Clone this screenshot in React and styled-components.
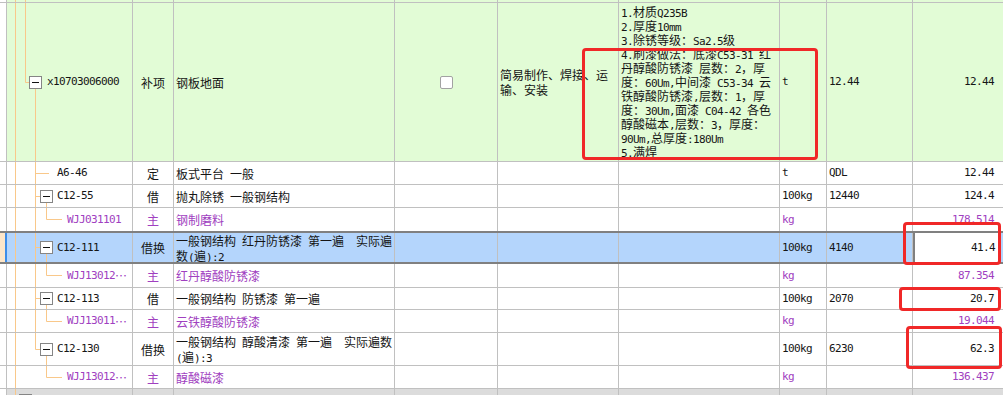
import React from 'react';
import styled, { createGlobalStyle, css } from 'styled-components';

const C = {
  grid: '#c0c0c0',
  green: '#e2fcd6',
  blue: '#b4d5fc',
  purple: '#a040c0',
  tree: '#f9c88a',
  dark: '#808080',
  red: '#f02828',
  text: '#151515',
};

const Global = createGlobalStyle`
  html, body { margin: 0; padding: 0; background: #fff; }
  body {
    width: 1003px; height: 395px; overflow: hidden;
    font-family: "Noto Sans CJK SC", "Noto Sans", sans-serif;
    font-size: 12px; color: ${C.text};
  }
`;

const COLS = '7px 126px 41px 221px 103px 121px 161px 47px 86px 1fr';

const Sheet = styled.div`
  position: relative;
  width: 1003px;
  height: 395px;
  overflow: hidden;
`;

const Row = styled.div`
  display: grid;
  grid-template-columns: ${COLS};
  box-sizing: border-box;
  height: ${(p) => p.$h}px;
  background: ${(p) => p.$bg || '#fff'};
  border-bottom: ${(p) => (p.$noBorder ? 'none' : `1px solid ${C.grid}`)};
  ${(p) => p.$top && css`border-top: 1px solid ${C.grid};`}
  ${(p) =>
    p.$sel &&
    css`
      border-top: 2px solid ${C.dark};
      border-bottom: 2px solid ${C.dark};
    `}
`;

const Cell = styled.div`
  box-sizing: border-box;
  border-right: 1px solid ${C.grid};
  display: flex;
  align-items: center;
  min-width: 0;
  overflow: hidden;
  white-space: pre;
  justify-content: ${(p) =>
    p.$align === 'center' ? 'center' : p.$align === 'right' ? 'flex-end' : 'flex-start'};
  padding: 0 ${(p) => (p.$align === 'right' ? 9 : 0)}px 0 ${(p) => (p.$align === 'left' || !p.$align ? p.$pl ?? 2 : 0)}px;
  color: ${(p) => (p.$purple ? C.purple : 'inherit')};
`;

const Gutter = styled.div`
  box-sizing: border-box;
  background: ${(p) => (p.$sel ? '#fde6c9' : '#fff')};
  border-right: ${(p) => (p.$sel ? '2px solid #3d8de8' : `1px solid ${C.grid}`)};
`;

const CodeCell = styled(Cell)`
  padding: 0;
  align-items: stretch;
`;

const CodeText = styled.span`
  display: flex;
  align-items: center;
`;

const QtyCell = styled(Cell)`
  border-right: none;
  ${(p) =>
    p.$editing &&
    css`
      background: #fff;
      border-left: 2px solid ${C.dark};
      border-right: 2px solid ${C.dark};
      margin-right: 3px;
      padding-right: 3px;
    `}
`;

const Lines = styled.div`
  display: flex;
  flex-direction: column;
`;

const Line = styled.span`
  display: block;
  height: ${(p) => p.$lh}px;
  line-height: ${(p) => p.$lh}px;
  white-space: pre;
`;

const Check = styled.span`
  width: 13px;
  height: 13px;
  box-sizing: border-box;
  border: 1px solid #a2a2a2;
  border-radius: 2px;
  background: #fff;
`;

const Lat = styled.span`
  font-family: "DejaVu Sans Mono", "Liberation Mono", monospace;
  font-size: 11px;
  letter-spacing: -0.62px;
  line-height: 0;
`;

const Mark = styled.div`
  position: absolute;
  box-sizing: border-box;
  left: ${(p) => p.$x}px;
  top: ${(p) => p.$y}px;
  width: ${(p) => p.$w}px;
  height: ${(p) => p.$hh}px;
  border: 3px solid ${C.red};
  border-radius: 4px;
  pointer-events: none;
`;

function T({ s }) {
  const parts = String(s).match(/[\x20-\x7e]+|[^\x20-\x7e]+/g) || [];
  return parts.map((p, i) =>
    /^[\x20-\x7e]/.test(p) ? <Lat key={i}>{p}</Lat> : <React.Fragment key={i}>{p}</React.Fragment>
  );
}

function TextLines({ lines, lh = 15 }) {
  return (
    <Lines>
      {lines.map((l, i) => (
        <Line key={i} $lh={lh}>
          <T s={l} />
        </Line>
      ))}
    </Lines>
  );
}

/* tree connector drawing; local x = absolute x - 7 */
const P15 = 8.5, P25 = 18.5, P35 = 28.5, P46 = 39.5;

function TreeBox({ x, cy }) {
  return (
    <g>
      <rect x={x + 0.5} y={cy - 6} width={12} height={12} fill="#fff" stroke="#858585" strokeWidth={1} />
      <line x1={x + 3} x2={x + 10} y1={cy} y2={cy} stroke="#111" strokeWidth={1} />
    </g>
  );
}

function Tree({ kind, h, last, after }) {
  const cy = Math.floor(h / 2) + 0.5;
  const L = (x1, y1, x2, y2, k) => (
    <line key={k} x1={x1} y1={y1} x2={x2} y2={y2} stroke={C.tree} strokeWidth={1} />
  );
  let w = 50;
  const els = [];
  if (kind === 'sliver') {
    w = 40;
    els.push(L(P15, 0, P15, h, 'a'), L(P25, 0, P25, h, 'b'));
  } else if (kind === 'root') {
    w = 40;
    els.push(L(P15, 0, P15, h, 'a'), L(P25, 0, P25, cy, 'b'), L(P25, cy, 22, cy, 'c'));
    els.push(L(P35, cy + 6, P35, h, 'd'));
    els.push(<TreeBox key="box" x={22} cy={cy} />);
  } else if (kind === 'leaf') {
    w = 50;
    els.push(L(P15, 0, P15, h, 'a'), L(P35, 0, P35, h, 'b'), L(P35, cy, 42, cy, 'c'));
  } else if (kind === 'node') {
    w = 50;
    els.push(L(P15, 0, P15, h, 'a'), L(P35, 0, P35, last ? cy : h, 'b'), L(P35, cy, 33, cy, 'c'));
    els.push(L(P46, cy + 6, P46, h, 'd'));
    els.push(<TreeBox key="box" x={33} cy={cy} />);
  } else if (kind === 'grand') {
    w = 60;
    els.push(L(P15, 0, P15, h, 'a'));
    if (!after) els.push(L(P35, 0, P35, h, 'b'));
    els.push(L(P46, 0, P46, cy, 'c'), L(P46, cy, 55, cy, 'd'));
  } else if (kind === 'group') {
    w = 40;
    els.push(L(P15, 0, P15, cy, 'a'), L(P15, cy, 12, cy, 'b'));
    els.push(<TreeBox key="box" x={12} cy={cy} />);
  }
  return (
    <svg width={w} height={h} style={{ flex: 'none', display: 'block' }}>
      {els}
    </svg>
  );
}

const ROWS = [
  {
    h: 160, ch: 158, top: true, bg: C.green, kind: 'root',
    code: 'x10703006000', type: '补项', name: ['钢板地面'], check: true,
    work: ['简易制作、焊接、运', '输、安装'],
    spec: [
      '1.材质Q235B',
      '2.厚度10mm',
      '3.除锈等级：Sa2.5级',
      '4.刷漆做法：底漆C53-31 红',
      '丹醇酸防锈漆 层数：2，厚',
      '度：60Um,中间漆 C53-34 云',
      '铁醇酸防锈漆,层数：1，厚',
      '度：30Um,面漆 C04-42 各色',
      '醇酸磁本,层数：3，厚度：',
      '90Um,总厚度:180Um',
      '5.满焊',
    ],
    unit: 't', expr: '12.44', qty: '12.44',
  },
  { h: 23, ch: 22, kind: 'leaf', code: 'A6-46', type: '定', name: ['板式平台 一般'], unit: 't', expr: 'QDL', qty: '12.44' },
  { h: 23, ch: 22, kind: 'node', code: 'C12-55', type: '借', name: ['抛丸除锈 一般钢结构'], unit: '100kg', expr: '12440', qty: '124.4' },
  { h: 23, ch: 23, noBorder: true, kind: 'grand', purple: true, code: 'WJJ031101', type: '主', name: ['钢制磨料'], unit: 'kg', qty: '178.514' },
  {
    h: 33, ch: 29, sel: true, bg: C.blue, kind: 'node', code: 'C12-111', type: '借换',
    name: ['一般钢结构 红丹防锈漆 第一遍  实际遍', '数(遍):2'], unit: '100kg', expr: '4140', qty: '41.4', editing: true,
  },
  { h: 24, ch: 23, kind: 'grand', purple: true, code: 'WJJ13012…', type: '主', name: ['红丹醇酸防锈漆'], unit: 'kg', qty: '87.354' },
  { h: 22, ch: 21, kind: 'node', code: 'C12-113', type: '借', name: ['一般钢结构 防锈漆 第一遍'], unit: '100kg', expr: '2070', qty: '20.7' },
  { h: 23, ch: 22, kind: 'grand', purple: true, code: 'WJJ13011…', type: '主', name: ['云铁醇酸防锈漆'], unit: 'kg', qty: '19.044' },
  {
    h: 33, ch: 32, kind: 'node', last: true, code: 'C12-130', type: '借换',
    name: ['一般钢结构 醇酸清漆 第一遍  实际遍数', '(遍):3'], unit: '100kg', expr: '6230', qty: '62.3',
  },
  { h: 23, ch: 22, kind: 'grand', after: true, purple: true, code: 'WJJ13012…', type: '主', name: ['醇酸磁漆'], unit: 'kg', qty: '136.437' },
  { h: 23, ch: 22, bg: '#dcdcdc', kind: 'group', code: '', type: '部', name: ['屋面工程'] },
];

function SheetRow({ r }) {
  return (
    <Row $h={r.h} $bg={r.bg} $top={r.top} $sel={r.sel} $noBorder={r.noBorder}>
      <Gutter $sel={r.sel} />
      <CodeCell $purple={r.purple}>
        <Tree kind={r.kind} h={r.ch} last={r.last} after={r.after} />
        <CodeText>
          <T s={r.code} />
        </CodeText>
      </CodeCell>
      <Cell $align="center" $purple={r.purple}>
        {r.type}
      </Cell>
      <Cell $purple={r.purple}>
        <TextLines lines={r.name} />
      </Cell>
      <Cell $align="center">{r.check && <Check />}</Cell>
      <Cell>{r.work && <TextLines lines={r.work} />}</Cell>
      <Cell>{r.spec && <TextLines lines={r.spec} lh={14} />}</Cell>
      <Cell $purple={r.purple}>{r.unit && <T s={r.unit} />}</Cell>
      <Cell>{r.expr && <T s={r.expr} />}</Cell>
      <QtyCell $align="right" $purple={r.purple} $editing={r.editing}>
        {r.qty && <T s={r.qty} />}
      </QtyCell>
    </Row>
  );
}

export default function App() {
  return (
    <>
      <Global />
      <Sheet>
        <Row $h={2} $bg={C.green} $noBorder>
          <Gutter />
          <CodeCell>
            <Tree kind="sliver" h={2} />
          </CodeCell>
          <Cell />
          <Cell />
          <Cell />
          <Cell />
          <Cell />
          <Cell />
          <Cell />
          <QtyCell />
        </Row>
        {ROWS.map((r, i) => (
          <SheetRow key={i} r={r} />
        ))}
        <Mark $x={582} $y={48} $w={236} $hh={112} />
        <Mark $x={903} $y={222} $w={98} $hh={43} />
        <Mark $x={899} $y={287} $w={102} $hh={24} />
        <Mark $x={906} $y={326} $w={96} $hh={43} />
      </Sheet>
    </>
  );
}
